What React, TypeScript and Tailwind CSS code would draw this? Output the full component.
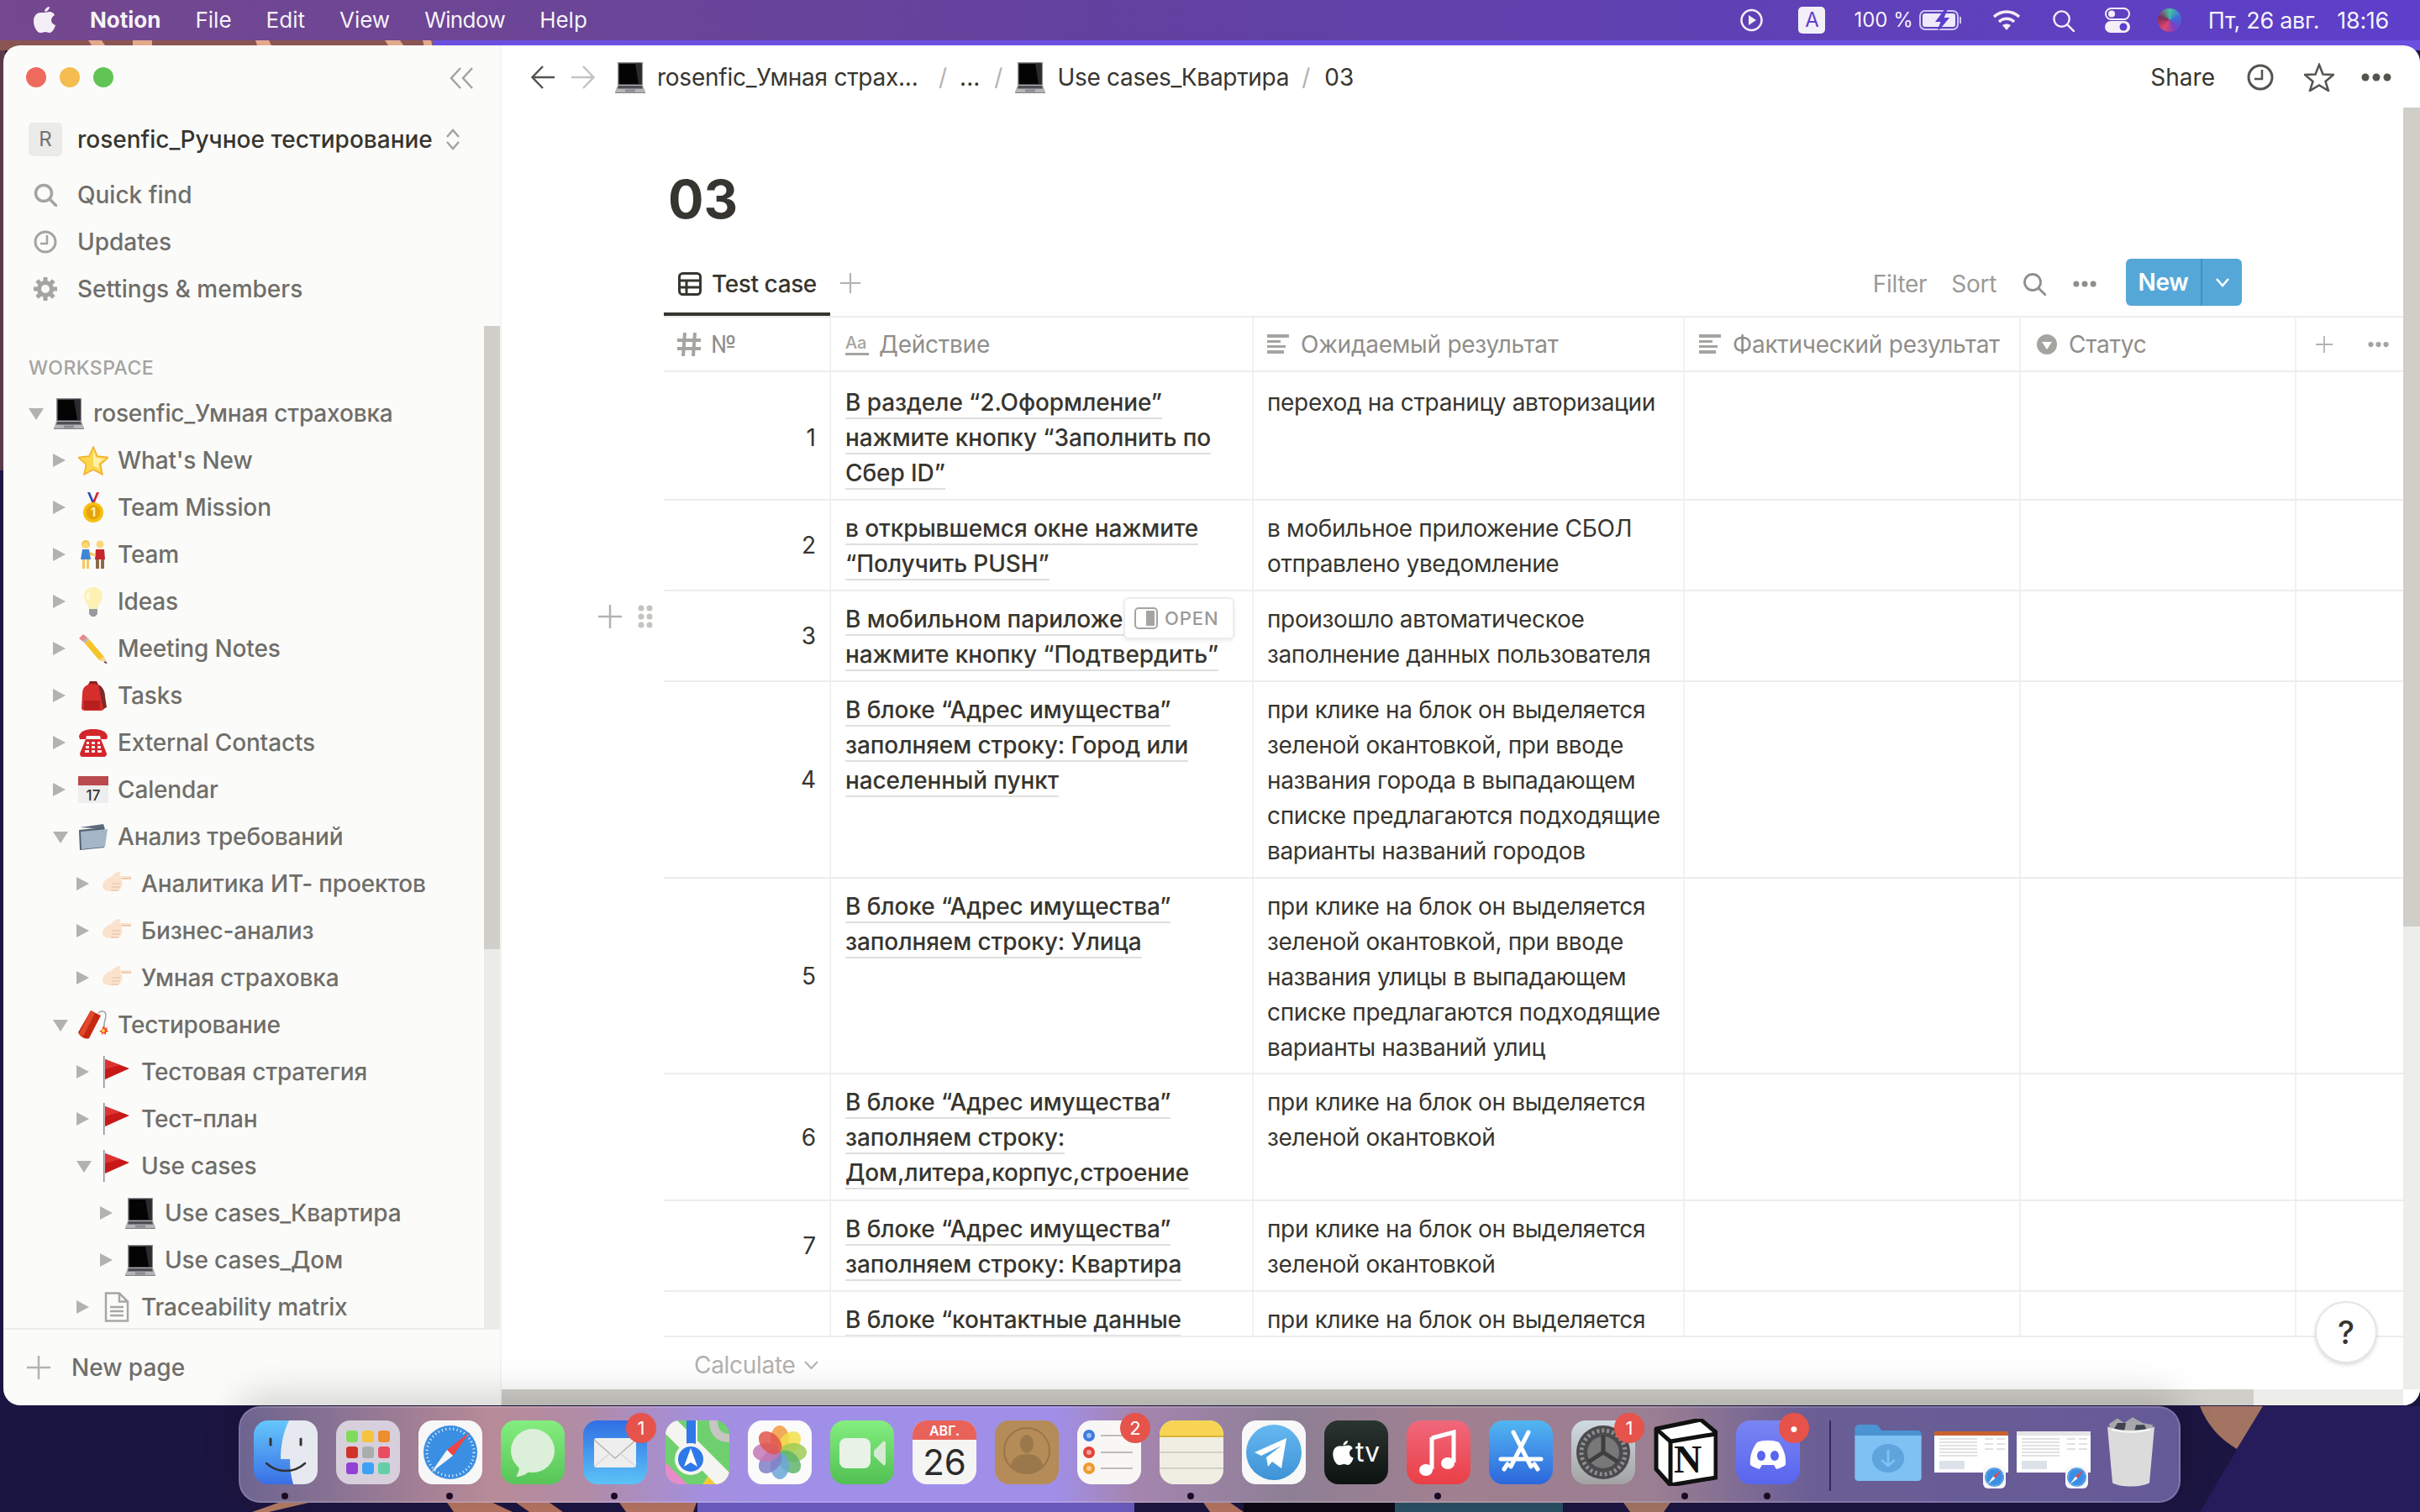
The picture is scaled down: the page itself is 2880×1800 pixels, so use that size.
import type { ReactNode } from 'react'

// ---------- emoji drawings (no colour emoji font on the page) ----------
const Laptop = () => (
  <svg width="36" height="38" viewBox="0 0 36 38">
    <path d="M3 1h30v27H3z" fill="#8e8e92" />
    <path d="M4.500 2.500h27v25h-27z" fill="#040404" />
    <path d="M24 2.500h7.500v25L28 27z" fill="#2b2b30" />
    <path d="M3 28h30l3 8.500H0z" fill="#b6b6ba" />
    <path d="M4 29h28l1 3.500H3z" fill="#4f4f53" />
    <path d="M12 33.500h12v3H12z" fill="#8d8d91" />
    <path d="M0 36.500h36V38H0z" fill="#85858a" />
  </svg>
)
const Star = () => (
  <svg width="36" height="36" viewBox="0 0 36 36">
    <path d="M18 2l5 11 13 1.500-9.500 8.500 2.500 12L18 29 7 35l2.500-12L0 14.500 13 13z" fill="#fbd64e" stroke="#f3ae2a" strokeWidth="1.500" />
    <path d="M18 7l3.500 8 9 1-6.500 6 1 6-7-3.500z" fill="#fff1a8" />
  </svg>
)
const Medal = () => (
  <svg width="36" height="36" viewBox="0 0 36 36">
    <path d="M11 0l6 14h3L14 0z" fill="#2b4fb8" />
    <path d="M25 0l-6 14h-3L22 0z" fill="#d7283a" />
    <circle cx="18" cy="24" r="12" fill="#f5c10e" />
    <circle cx="18" cy="24" r="8.500" fill="#e7a408" />
    <text x="18" y="29" textAnchor="middle" fontSize="14" fontWeight="700" fill="#fff3b8" fontFamily="Inter,sans-serif">1</text>
  </svg>
)
const Couple = () => (
  <svg width="36" height="36" viewBox="0 0 36 36">
    <circle cx="9" cy="6" r="5" fill="#f6c552" /><circle cx="9" cy="7" r="3.500" fill="#fcd77b" />
    <circle cx="26" cy="6" r="4.500" fill="#fcd77b" />
    <path d="M5 12h8l2 12H3z" fill="#3f86d8" />
    <path d="M21 12h10l1 12h-12z" fill="#c5262e" />
    <path d="M5 24h3v11H5zM10 24h3v11h-3z" fill="#f5c660" />
    <path d="M21 24h4v11h-4zM27 24h4v11h-4z" fill="#8f6a4a" />
    <path d="M14 15l7 3v2l-7-1z" fill="#f5c660" />
  </svg>
)
const Bulb = () => (
  <svg width="36" height="36" viewBox="0 0 36 36">
    <path d="M18 1c7 0 11 5 11 11 0 6-5 8-6 15H13c-1-7-6-9-6-15C7 6 11 1 18 1z" fill="#fdf1b4" />
    <path d="M13 8c-2 3-2 6 0 8" stroke="#fffbe6" strokeWidth="3" fill="none" />
    <path d="M13 27h10v6l-3 3h-4l-3-3z" fill="#9a9a9e" />
  </svg>
)
const Pencil = () => (
  <svg width="36" height="36" viewBox="0 0 36 36">
    <path d="M1 6l5-5 5 4-5 5z" fill="#e88a8d" />
    <path d="M6 10l5-5 2 2-5 5z" fill="#b8b8bc" />
    <path d="M8 12l5-5 18 21-6 4z" fill="#f6c429" />
    <path d="M25 32l6-4 4 8z" fill="#f1d5a8" />
    <path d="M32 33l3 3-4-1z" fill="#222" />
  </svg>
)
const Backpack = () => (
  <svg width="36" height="36" viewBox="0 0 36 36">
    <path d="M14 1h8l2 4H12z" fill="#8f1d1d" />
    <path d="M5 16C5 7 11 4 18 4s12 4 12 12l1 17c0 2-2 3-4 3H8c-2 0-4-1-4-3z" fill="#d62d2d" />
    <path d="M24 5c5 2 8 8 8 14l2 13-4 2z" fill="#7c2a2a" />
    <path d="M7 24h19v9c0 1-1 2-2 2H9c-1 0-2-1-2-2z" fill="#b71f1f" />
  </svg>
)
const Phone = () => (
  <svg width="36" height="34" viewBox="0 0 36 34">
    <path d="M1 10C2 3 10 1 18 1s16 2 17 9l-1 3h-7l-1-4H10l-1 4H2z" fill="#d4252b" />
    <path d="M9 13h18l7 17c0 2-1 4-3 4H5c-2 0-3-2-3-4z" fill="#d4252b" />
    <g fill="#f4e9e6">
      <path d="M10 16h3v3h-3zM16 16h4v3h-4zM23 16h3v3h-3zM9 21h4v3H9zM16 21h4v3h-4zM23 21h4v3h-4zM8 26h5v3H8zM16 26h4v3h-4zM23 26h5v3h-5z" />
    </g>
  </svg>
)
const CalendarEmoji = () => (
  <svg width="36" height="32" viewBox="0 0 36 32">
    <path d="M0 0h36v32H0z" fill="#eeeeee" />
    <path d="M0 0h36v11H0z" fill="#b94a4d" />
    <text x="18" y="29" textAnchor="middle" fontSize="17" fill="#333" fontFamily="Inter,sans-serif">17</text>
  </svg>
)
const Folder = () => (
  <svg width="36" height="32" viewBox="0 0 36 32">
    <path d="M2 5l28-4 2 6z" fill="#5d6d7e" />
    <path d="M1 8l30-3v24L2 32z" fill="#54616e" />
    <path d="M3 10l32-3-3 21-28 3z" fill="#a4b6c8" />
  </svg>
)
const Hand = () => (
  <svg width="36" height="30" viewBox="0 0 36 30">
    <path d="M12 6c2-3 6-5 9-5 1 0 2 1 1 3l-1 2h13c2 0 2 3 0 3H24l-1 2c2 1 2 3 1 4 1 2 0 3-1 4 0 2-1 3-2 4-2 1-5 1-9 1-5 0-10-1-11-5-1-5 4-10 12-13z" fill="#fbe2cc" />
    <path d="M22 15H13M22 19H12M20 23H11" stroke="#e4bea0" strokeWidth="1" fill="none" />
    <path d="M24 9h11" stroke="#e4a87a" strokeWidth="1" />
  </svg>
)
const Dynamite = () => (
  <svg width="36" height="36" viewBox="0 0 36 36">
    <path d="M15 1L27 7 13 34c-4 2-11-2-13-7z" fill="#c52810" />
    <path d="M15 1l5 3L6 32l-5-3z" fill="#e0492a" />
    <path d="M24 4c5-4 9-2 9 3 0 4-3 8-2 14" stroke="#a0a0a0" strokeWidth="1.500" fill="none" />
    <path d="M30 19l2 3 3-1-1 3 2 2-3 1 0 3-3-2-2 2 0-3-3-1 3-2z" fill="#ef4b23" />
    <circle cx="30" cy="25" r="2" fill="#ffd14a" />
  </svg>
)
const Flag = () => (
  <svg width="36" height="38" viewBox="0 0 36 38">
    <path d="M2 0h1.500v38H2z" fill="#8c8c90" />
    <path d="M4 4l29 11L4 28z" fill="#c81818" />
    <path d="M4 4l18 7L4 16z" fill="#dd3333" />
  </svg>
)
const Doc = () => (
  <svg width="30" height="36" viewBox="0 0 30 36" fill="none" stroke="#a8a7a3" strokeWidth="2.500">
    <path d="M2 1.500h16l10 10v23H2z" fill="#fbfbfa" />
    <path d="M18 1.500v10h10M7 18h16M7 23h16M7 28h16" />
  </svg>
)

// ---------- small stroke icons ----------
const Caret = ({ open }: { open?: boolean }) => (
  <svg width="18" height="18" viewBox="0 0 18 18" className="shrink-0">
    {open ? <path d="M0 3h18L9 17z" fill="#b3b2ae" /> : <path d="M0 1l15 8-15 8z" fill="#b3b2ae" />}
  </svg>
)
const Plus = ({ size = 28, color = '#b3b2ae' }: { size?: number; color?: string }) => (
  <svg width={size} height={size} viewBox="0 0 28 28" stroke={color} strokeWidth="2.500">
    <path d="M14 0v28M0 14h28" />
  </svg>
)
const Dots = ({ color = '#37352f', w = 36 }: { color?: string; w?: number }) => (
  <svg width={w} height="10" viewBox="0 0 36 10" fill={color}>
    <circle cx="5" cy="5" r="4.500" /><circle cx="18" cy="5" r="4.500" /><circle cx="31" cy="5" r="4.500" />
  </svg>
)
const Lines = () => (
  <svg width="26" height="24" viewBox="0 0 26 24" fill="#a5a4a0">
    <path d="M0 0h26v4H0zM0 7h16v3H0zM0 13h22v3H0zM0 19h20v4H0z" />
  </svg>
)
const Search = ({ color = '#a5a4a0', size = 28, sw = 3.500 }: { color?: string; size?: number; sw?: number }) => (
  <svg width={size} height={size} viewBox="0 0 28 28" fill="none" stroke={color} strokeWidth={sw}>
    <circle cx="12" cy="12" r="9.500" /><path d="M19 19l8 8" strokeLinecap="round" />
  </svg>
)
const Gear = () => (
  <svg width="28" height="30" viewBox="0 0 28 28" fill="none" stroke="#a5a4a0" className="mr-[24px]">
    <circle cx="14" cy="14" r="7.500" strokeWidth="5" />
    {[0, 45, 90, 135].map(a => (
      <path key={a} d="M14 0v28" strokeWidth="5" strokeDasharray="5 18" transform={`rotate(${a} 14 14)`} />
    ))}
  </svg>
)

// ---------- dock icons ----------
const Safari = ({ size = 76 }: { size?: number }) => (
  <svg width={size} height={size} viewBox="0 0 76 76">
    <rect width="76" height="76" rx="17" fill="#f7f7f7" />
    <circle cx="38" cy="38" r="32" fill="#3b8fe3" />
    <circle cx="38" cy="38" r="28" fill="none" stroke="#fff" strokeWidth="3" strokeDasharray="1 3.500" />
    <path d="M61 14L41 42 34 35z" fill="#ef4444" />
    <path d="M15 62l19-27 7 7z" fill="#f5f5f5" />
  </svg>
)
const icons: Record<string, ReactNode> = {
  finder: (
    <svg width="76" height="76" viewBox="0 0 76 76">
      <defs>
        <linearGradient id="fa" x1="0" y1="0" x2="0" y2="1"><stop stopColor="#64c8fb" /><stop offset="1" stopColor="#3a6fe6" /></linearGradient>
      </defs>
      <rect width="76" height="76" rx="17" fill="url(#fa)" />
      <path d="M42 0h17c10 0 17 7 17 17v42c0 10-7 17-17 17H47c-3-10-4-20-4-30H32c0-16 3-32 10-46z" fill="#e6e9ef" />
      <path d="M20 22v7M56 22v7" stroke="#333" strokeWidth="3" strokeLinecap="round" />
      <path d="M15 51c13 12 33 12 46 0" stroke="#333" strokeWidth="2.500" fill="none" strokeLinecap="round" />
    </svg>
  ),
  launchpad: (
    <svg width="76" height="76" viewBox="0 0 76 76">
      <rect width="76" height="76" rx="17" fill="#d7d0dc" />
      {[['#7fdc5b', 12, 12], ['#f7c33c', 31, 12], ['#ed8d2e', 50, 12], ['#d1332b', 12, 31], ['#a9adae', 31, 31], ['#ea4d63', 50, 31], ['#9340d4', 12, 50], ['#3da2f3', 31, 50], ['#64cfa7', 50, 50]].map(([c, x, y]) => (
        <rect key={String(c)} x={x} y={y} width="14" height="14" rx="3.500" fill={String(c)} />
      ))}
    </svg>
  ),
  safari: <Safari />,
  messages: (
    <svg width="76" height="76" viewBox="0 0 76 76">
      <defs><linearGradient id="ma" x1="0" y1="0" x2="0" y2="1"><stop stopColor="#84ee80" /><stop offset="1" stopColor="#57c457" /></linearGradient></defs>
      <rect width="76" height="76" rx="17" fill="url(#ma)" />
      <ellipse cx="38" cy="36" rx="26" ry="26" fill="#dcefd8" />
      <path d="M22 54c0 6-2 10-4 13 6 0 13-3 16-7z" fill="#dcefd8" />
    </svg>
  ),
  mail: (
    <svg width="76" height="76" viewBox="0 0 76 76">
      <defs><linearGradient id="ml" x1="0" y1="0" x2="0" y2="1"><stop stopColor="#2f6ee4" /><stop offset="1" stopColor="#5cc3f7" /></linearGradient></defs>
      <rect width="76" height="76" rx="17" fill="url(#ml)" />
      <rect x="13" y="21" width="50" height="35" rx="3" fill="#eeeeee" />
      <path d="M13 23l25 22 25-22" stroke="#b5b5b5" strokeWidth="1.500" fill="none" />
      <path d="M13 55l19-16M63 55L44 39" stroke="#c9c9c9" strokeWidth="1" />
    </svg>
  ),
  maps: (
    <svg width="76" height="76" viewBox="0 0 76 76">
      <defs><clipPath id="mc"><rect width="76" height="76" rx="17" /></clipPath></defs>
      <g clipPath="url(#mc)">
        <rect width="76" height="76" fill="#6fd06f" />
        <path d="M0 50l26 26H0z" fill="#e88bca" />
        <path d="M44 76l14-20 18 20z" fill="#f5cb3c" />
        <path d="M0 0h14l62 62v14H60L0 16z" fill="#f4f4f0" />
        <path d="M26 0h12v44H26z" fill="#f4f4f0" />
        <path d="M25 0h11v40H25z" fill="#2f78ea" />
        <path d="M52 0c0 16 8 26 24 26V16C66 16 62 10 62 0z" fill="#c6c6c2" />
        <circle cx="30" cy="46" r="19" fill="#f4f4f0" />
        <circle cx="30" cy="46" r="15" fill="#2f78ea" />
        <path d="M30 33l8 22-8-5-8 5z" fill="#fff" />
      </g>
    </svg>
  ),
  photos: (
    <svg width="76" height="76" viewBox="0 0 76 76">
      <rect width="76" height="76" rx="17" fill="#fbfbfb" />
      {[['#f29b3c', 0], ['#f2df4b', 45], ['#9ecb55', 90], ['#5fb56b', 135], ['#6ba6d9', 180], ['#7f7fc5', 225], ['#c478b4', 270], ['#e0554c', 315]].map(([c, a]) => (
        <ellipse key={String(a)} cx="38" cy="22" rx="11" ry="16" fill={String(c)} opacity="0.85" transform={`rotate(${a} 38 38)`} />
      ))}
    </svg>
  ),
  facetime: (
    <svg width="76" height="76" viewBox="0 0 76 76">
      <defs><linearGradient id="ft" x1="0" y1="0" x2="0" y2="1"><stop stopColor="#84ee80" /><stop offset="1" stopColor="#52c052" /></linearGradient></defs>
      <rect width="76" height="76" rx="17" fill="url(#ft)" />
      <rect x="11" y="21" width="37" height="36" rx="8" fill="#e8f2e6" />
      <path d="M52 36l11-11c1-1 3 0 3 2v24c0 2-2 3-3 2L52 42z" fill="#d5ead2" />
    </svg>
  ),
  calendar: (
    <div className="flex h-[76px] w-[76px] flex-col overflow-hidden rounded-[17px] bg-[#f5f5f3]">
      <div className="flex h-[23px] items-center justify-center bg-[#e8625a] text-[16px] font-semibold leading-none text-white">АВГ.</div>
      <div className="flex flex-1 items-center justify-center text-[42px] leading-none text-[#2b2b2b]">26</div>
    </div>
  ),
  contacts: (
    <svg width="76" height="76" viewBox="0 0 76 76">
      <rect width="76" height="76" rx="17" fill="#b58c58" />
      <circle cx="38" cy="36" r="27" fill="none" stroke="#97754a" strokeWidth="2" />
      <ellipse cx="38" cy="28" rx="8" ry="11" fill="#9a784c" />
      <path d="M18 55c3-12 12-15 20-15s17 3 20 15c-5 5-12 8-20 8s-15-3-20-8z" fill="#9a784c" />
    </svg>
  ),
  reminders: (
    <svg width="76" height="76" viewBox="0 0 76 76">
      <rect width="76" height="76" rx="17" fill="#f8f7f5" />
      <circle cx="14" cy="18" r="7" fill="#3d7ce0" /><circle cx="14" cy="38" r="7" fill="#e2433c" /><circle cx="14" cy="57" r="7" fill="#ee9a2e" />
      <circle cx="14" cy="18" r="3" fill="#fff" opacity=".5" /><circle cx="14" cy="38" r="3" fill="#fff" opacity=".5" /><circle cx="14" cy="57" r="3" fill="#fff" opacity=".5" />
      <path d="M28 18h38M28 38h38M28 57h38" stroke="#bdbcb9" strokeWidth="2" />
    </svg>
  ),
  notes: (
    <svg width="76" height="76" viewBox="0 0 76 76">
      <defs><clipPath id="nc"><rect width="76" height="76" rx="17" /></clipPath></defs>
      <g clipPath="url(#nc)">
        <rect width="76" height="76" fill="#f0ede3" />
        <rect width="76" height="19" fill="#f8d455" />
        <path d="M0 19h76" stroke="#dcb53a" strokeWidth="2" />
        <path d="M0 38h76M0 57h76" stroke="#d2d0c8" strokeWidth="2" />
      </g>
    </svg>
  ),
  telegram: (
    <svg width="76" height="76" viewBox="0 0 76 76">
      <defs><linearGradient id="tg" x1="0" y1="0" x2="0" y2="1"><stop stopColor="#66b8f1" /><stop offset="1" stopColor="#3e93d6" /></linearGradient></defs>
      <rect width="76" height="76" rx="17" fill="#f8f8f8" />
      <circle cx="38" cy="38" r="33" fill="url(#tg)" />
      <path d="M15 38l38-17-6 36-11-8-5 6-2-11 18-14-24 12z" fill="#fff" />
    </svg>
  ),
  tv: (
    <div className="flex h-[76px] w-[76px] items-center justify-center gap-[2px] rounded-[17px] bg-gradient-to-b from-[#2a3530] to-[#0e1312] text-[32px] font-normal leading-none text-white">
      <svg width="25" height="30" viewBox="0 0 26 32" fill="#fff">
        <path d="M19 1c0 3-3 6-6 6 0-3 3-6 6-6zM13 8c2 0 3-1 6-1 2 0 5 1 6 4-3 2-4 4-4 6 0 3 2 5 5 6-1 4-4 9-7 9-2 0-3-1-5-1s-3 1-5 1C5 33 0 26 0 18 0 12 4 8 8 8c2 0 4 0 5 0z" />
      </svg>
      tv
    </div>
  ),
  music: (
    <svg width="76" height="76" viewBox="0 0 76 76">
      <defs><linearGradient id="mu" x1="0" y1="0" x2="0" y2="1"><stop stopColor="#f0687c" /><stop offset="1" stopColor="#ea3f47" /></linearGradient></defs>
      <rect width="76" height="76" rx="17" fill="url(#mu)" />
      <path d="M30 21l26-7v36" stroke="#fff" strokeWidth="5" fill="none" />
      <path d="M30 20v38" stroke="#fff" strokeWidth="5" />
      <ellipse cx="23" cy="59" rx="8" ry="7" fill="#fff" /><ellipse cx="49" cy="51" rx="8" ry="7" fill="#fff" />
    </svg>
  ),
  appstore: (
    <svg width="76" height="76" viewBox="0 0 76 76">
      <defs><linearGradient id="as" x1="0" y1="0" x2="0" y2="1"><stop stopColor="#52b6f2" /><stop offset="1" stopColor="#2c66dc" /></linearGradient></defs>
      <rect width="76" height="76" rx="17" fill="url(#as)" />
      <path d="M29 14l21 41M47 14L26 55M14 46h48M18 58l4-6M58 58l-4-6" stroke="#fff" strokeWidth="5" strokeLinecap="round" />
    </svg>
  ),
  settings: (
    <svg width="76" height="76" viewBox="0 0 76 76">
      <defs><linearGradient id="st" x1="0" y1="0" x2="0" y2="1"><stop stopColor="#cfdbe2" /><stop offset="1" stopColor="#a2a2a2" /></linearGradient></defs>
      <rect width="76" height="76" rx="17" fill="url(#st)" />
      <circle cx="38" cy="38" r="32" fill="#4b4b4d" />
      <circle cx="38" cy="38" r="26" fill="none" stroke="#8f8f92" strokeWidth="5" strokeDasharray="3 3" />
      <circle cx="38" cy="38" r="19" fill="#787879" />
      <path d="M38 38V18M38 38L21 49M38 38l17 11" stroke="#3e3e40" strokeWidth="5" />
    </svg>
  ),
  notion: (
    <div className="relative h-[76px] w-[76px]">
      <svg className="absolute -top-[2px] left-0" width="76" height="80" viewBox="0 0 76 80">
        <path d="M3 12L56 1l18 15 0 54-54 9L3 60z" fill="#fff" stroke="#111" strokeWidth="5" strokeLinejoin="round" />
        <path d="M3 12l17 15 54-9" fill="none" stroke="#111" strokeWidth="5" />
        <path d="M20 27v50" stroke="#111" strokeWidth="5" />
      </svg>
      <div className="absolute left-[24px] top-[24px] text-[46px] font-bold leading-none text-[#111] [font-family:'Liberation_Serif',serif]">N</div>
    </div>
  ),
  discord: (
    <svg width="76" height="76" viewBox="0 0 76 76">
      <defs><linearGradient id="dc" x1="0" y1="0" x2="0" y2="1"><stop stopColor="#7a85f3" /><stop offset="1" stopColor="#5865ee" /></linearGradient></defs>
      <rect width="76" height="76" rx="17" fill="url(#dc)" />
      <path d="M25 26c8-3 18-3 26 0 6 8 9 17 8 27-4 3-8 4-11 5l-3-5-14 0-3 5c-3-1-7-2-11-5-1-10 2-19 8-27z" fill="#fff" />
      <ellipse cx="30" cy="42" rx="5" ry="6" fill="#5865ee" /><ellipse cx="46" cy="42" rx="5" ry="6" fill="#5865ee" />
    </svg>
  ),
  folder: (
    <svg width="86" height="76" viewBox="0 0 76 76" preserveAspectRatio="none">
      <path d="M3 20V10c0-3 2-5 5-5h16c3 0 5 3 7 7h38c2 0 4 2 4 4v8z" fill="#4b93d2" />
      <path d="M3 18h70v50c0 3-2 4-4 4H7c-2 0-4-1-4-4z" fill="#7ec2f4" />
      <circle cx="38" cy="45" r="17" fill="#5fa4dc" />
      <path d="M38 35v19M31 47l7 7 7-7" stroke="#7ec2f4" strokeWidth="2.500" fill="none" />
    </svg>
  ),
  trash: (
    <svg width="76" height="86" viewBox="0 0 76 76" preserveAspectRatio="none">
      <path d="M12 9l10-6 8 5 10-6 12 6 12 2-2 10H14z" fill="#a7a7ab" />
      <path d="M22 8h10l-2 9H16zM44 10h10l4 8H42z" fill="#3f4350" />
      <path d="M10 12c15 5 41 5 56 0L60 71c-8 5-36 5-44 0z" fill="#dcdbdc" />
      <path d="M15 15c14 3 32 3 46 0" stroke="#f4f4f4" strokeWidth="2" fill="none" />
    </svg>
  ),
}

const DocThumb = ({ header }: { header: string }) => (
  <div className="relative h-[76px] w-[76px]">
    <div className="absolute left-0 top-[13px] h-[49px] w-[88px] overflow-hidden bg-white">
      <div className={`h-[5px] w-full ${header}`} />
      <svg width="88" height="44" viewBox="0 0 88 44" stroke="#c3c3c8" strokeWidth="1">
        <path d="M6 4h45M6 8h45M6 12h45M6 16h45M6 20h45M6 24h45M60 4h10M74 4h10M60 10h10M74 10h10M60 16h10M74 16h10" />
        <path d="M6 30h30v10H6z" fill="#dde1ea" stroke="none" />
      </svg>
    </div>
    <div className="absolute left-[58px] top-[54px]"><Safari size={27} /></div>
  </div>
)

const dock: { id: string; badge?: string; dot?: boolean }[] = [
  { id: 'finder', dot: true },
  { id: 'launchpad' },
  { id: 'safari', dot: true },
  { id: 'messages' },
  { id: 'mail', badge: '1', dot: true },
  { id: 'maps' },
  { id: 'photos' },
  { id: 'facetime' },
  { id: 'calendar' },
  { id: 'contacts' },
  { id: 'reminders', badge: '2' },
  { id: 'notes', dot: true },
  { id: 'telegram' },
  { id: 'tv' },
  { id: 'music', dot: true },
  { id: 'appstore' },
  { id: 'settings', badge: '1' },
  { id: 'notion', dot: true },
  { id: 'discord', badge: '•', dot: true },
]

function Dock() {
  return (
    <div className="relative z-10 ml-[284px] mt-px flex h-[115px] w-[2311px] items-start gap-[22px] rounded-[26px] border-2 border-white/15 bg-[linear-gradient(90deg,#6d6490_0%,#b88b98_13%,#b08ca8_18%,#a48fe0_24%,#a08fe8_29%,#a08fe8_42%,#a585b0_46%,#8e7f95_54%,#a08090_62%,#9a7e92_73%,#6a5e95_81%,#655a98_100%)] pl-[16px] pt-[15px] shadow-[0_-14px_44px_rgba(0,0,0,0.16)]">
      {dock.map(d => (
        <div key={d.id} className="relative h-[76px] w-[76px]">
          {icons[d.id]}
          {d.badge && (
            <div className="absolute left-[51px] top-[-9px] flex h-[36px] w-[36px] items-center justify-center rounded-full bg-[#e5534b] text-[22px] leading-none text-white">{d.badge}</div>
          )}
          {d.dot && <div className="absolute left-[33px] top-[86px] h-[8px] w-[8px] rounded-full bg-[#1c0a24]" />}
        </div>
      ))}
      <div className="relative ml-[13px] mr-[3px] h-[84px] w-[2px] bg-[#2f2a55]" />
      <div className="relative h-[76px] w-[76px]">{icons.folder}</div>
      <DocThumb header="bg-[#c8622d]" />
      <DocThumb header="bg-[#e5e5e8]" />
      <div className="relative -mt-[6px] h-[76px] w-[76px]">{icons.trash}</div>
    </div>
  )
}

function MenuBar() {
  return (
    <div className="relative flex h-12 shrink-0 items-center justify-between bg-gradient-to-r from-[#74488f] via-[#63419f] via-45% to-[#5d3fcb] pl-[40px] pr-[37px] text-[26px] leading-none text-white/95">
      <div className="flex items-center">
        <svg width="26" height="32" viewBox="0 0 26 32" fill="#f4eff6" className="mr-[41px] -translate-y-[1px]">
          <path d="M19 1c0 3-3 6-6 6 0-3 3-6 6-6zM13 8c2 0 3-1 6-1 2 0 5 1 6 4-3 2-4 4-4 6 0 3 2 5 5 6-1 4-4 9-7 9-2 0-3-1-5-1s-3 1-5 1C5 33 0 26 0 18 0 12 4 8 8 8c2 0 4 0 5 0z" />
        </svg>
        <span className="mr-[41px] font-bold">Notion</span>
        <span className="mr-[41px]">File</span>
        <span className="mr-[41px]">Edit</span>
        <span className="mr-[41px]">View</span>
        <span className="mr-[41px] tracking-[-0.6px]">Window</span>
        <span>Help</span>
      </div>
      <div className="flex items-center">
        <svg width="27" height="28" viewBox="0 0 27 28" fill="none" stroke="#f4eff6" strokeWidth="2.500" className="mr-[42px]">
          <circle cx="13.500" cy="14" r="12" /><path d="M10 8l9 6-9 6z" fill="#f4eff6" stroke="none" />
        </svg>
        <div className="mr-[34px] flex h-[32px] w-[32px] items-center justify-center rounded-[5px] bg-[#f2eff9] text-[24px] text-[#5d3fcb]">A</div>
        <span className="mr-[7px] text-[24px]">100 %</span>
        <svg width="51" height="24" viewBox="0 0 51 24" className="mr-[36px]">
          <rect x="1" y="1" width="45" height="22" rx="6" fill="none" stroke="#cfc6f2" strokeWidth="2" />
          <rect x="4" y="4" width="39" height="16" rx="3" fill="#eeeafb" />
          <path d="M30 1l-9 12h6l-4 10 11-13h-6l4-9z" fill="#5d3fcb" stroke="#5d3fcb" strokeWidth="2" />
          <path d="M48 8h2v8h-2z" fill="#cfc6f2" />
        </svg>
        <svg width="34" height="26" viewBox="0 0 34 26" fill="none" stroke="#f4eff6" strokeWidth="3.500" className="mr-[37px]">
          <path d="M2 9c9-8 21-8 30 0M8 15c5-5 13-5 18 0" /><path d="M17 25l-5-6c3-2 7-2 10 0z" fill="#f4eff6" stroke="none" />
        </svg>
        <div className="mr-[36px]"><Search color="#f4eff6" size={27} sw={2.500} /></div>
        <svg width="30" height="30" viewBox="0 0 30 30" className="mr-[33px]">
          <rect x="1" y="1" width="28" height="13" rx="6.500" fill="none" stroke="#f4eff6" strokeWidth="2" />
          <circle cx="8" cy="7.500" r="4" fill="#f4eff6" />
          <rect y="16" width="30" height="14" rx="7" fill="#f4eff6" />
          <circle cx="22" cy="23" r="4.500" fill="#5d3fcb" />
        </svg>
        <div className="mr-[32px] h-[28px] w-[28px] rounded-full bg-[conic-gradient(#46c3a5,#3c6cd8,#7a3fc8,#e0466e,#7c2d5f,#46c3a5)]" />
        <span className="mr-[21px] text-[27px] tracking-[-0.3px]">Пт, 26 авг.</span>
        <span className="text-[27px] tracking-[-0.3px]">18:16</span>
      </div>
    </div>
  )
}

const tree: { label: string; level: number; open?: boolean; icon: ReactNode }[] = [
  { label: 'rosenfic_Умная страховка', level: 0, open: true, icon: <Laptop /> },
  { label: "What's New", level: 1, icon: <Star /> },
  { label: 'Team Mission', level: 1, icon: <Medal /> },
  { label: 'Team', level: 1, icon: <Couple /> },
  { label: 'Ideas', level: 1, icon: <Bulb /> },
  { label: 'Meeting Notes', level: 1, icon: <Pencil /> },
  { label: 'Tasks', level: 1, icon: <Backpack /> },
  { label: 'External Contacts', level: 1, icon: <Phone /> },
  { label: 'Calendar', level: 1, icon: <CalendarEmoji /> },
  { label: 'Анализ требований', level: 1, open: true, icon: <Folder /> },
  { label: 'Аналитика ИТ- проектов', level: 2, icon: <Hand /> },
  { label: 'Бизнес-анализ', level: 2, icon: <Hand /> },
  { label: 'Умная страховка', level: 2, icon: <Hand /> },
  { label: 'Тестирование', level: 1, open: true, icon: <Dynamite /> },
  { label: 'Тестовая стратегия', level: 2, icon: <Flag /> },
  { label: 'Тест-план', level: 2, icon: <Flag /> },
  { label: 'Use cases', level: 2, open: true, icon: <Flag /> },
  { label: 'Use cases_Квартира', level: 3, icon: <Laptop /> },
  { label: 'Use cases_Дом', level: 3, icon: <Laptop /> },
  { label: 'Traceability matrix', level: 2, icon: <Doc /> },
]

function Sidebar() {
  return (
    <aside className="flex w-[593px] shrink-0 flex-col border-r-2 border-[#f3f3f1] bg-[#fbfbfa] text-[28px] font-medium text-[#6f6e69]">
      <div className="flex h-[84px] shrink-0 items-start justify-between pl-[27px] pr-[32px] pt-[26px]">
        <div className="flex gap-[16px]">
          <div className="h-[24px] w-[24px] rounded-full bg-[#ee6a5f]" />
          <div className="h-[24px] w-[24px] rounded-full bg-[#f5bd4f]" />
          <div className="h-[24px] w-[24px] rounded-full bg-[#61c454]" />
        </div>
        <svg width="28" height="26" viewBox="0 0 28 26" fill="none" stroke="#a5a4a0" strokeWidth="2.500">
          <path d="M13 1L2 13l11 12M27 1L16 13l11 12" />
        </svg>
      </div>
      <div className="flex h-[56px] shrink-0 items-center pl-[30px] text-[#37352f]">
        <div className="mr-[18px] flex h-[40px] w-[40px] items-center justify-center rounded-[5px] bg-[#ebebe9] text-[24px] font-normal text-[#73726e]">R</div>
        <span>rosenfic_Ручное тестирование</span>
        <svg width="18" height="26" viewBox="0 0 18 26" fill="none" stroke="#a5a4a0" strokeWidth="2.500" className="ml-[15px]">
          <path d="M2 10l7-8 7 8M2 16l7 8 7-8" />
        </svg>
      </div>
      <div className="mt-[10px] flex shrink-0 flex-col">
        <div className="flex h-[56px] items-center pl-[36px]">
          <div className="mr-[24px]"><Search /></div>Quick find
        </div>
        <div className="flex h-[56px] items-center pl-[36px]">
          <svg width="28" height="28" viewBox="0 0 28 28" fill="none" stroke="#a5a4a0" strokeWidth="3" className="mr-[24px]">
            <circle cx="14" cy="14" r="12" /><path d="M16 6v10H8" strokeWidth="2.500" />
          </svg>
          Updates
        </div>
        <div className="flex h-[56px] items-center pl-[36px]">
          <Gear />
          Settings &amp; members
        </div>
      </div>
      <div className="mt-[16px] flex min-h-0 flex-1">
        <div className="min-w-0 flex-1 overflow-hidden">
          <div className="mb-[12px] ml-[30px] mt-[36px] text-[23px] leading-[28px] tracking-[0.02em] text-[#a5a4a0]">WORKSPACE</div>
          {tree.map(t => (
            <div key={t.label} className={`flex h-[56px] items-center ${t.level === 0 ? 'pl-[30px]' : t.level === 1 ? 'pl-[59px]' : t.level === 2 ? 'pl-[87px]' : 'pl-[115px]'}`}>
              <div className="mr-[12px] w-[18px]"><Caret open={t.open} /></div>
              <div className="mr-[11px] flex h-[38px] w-[36px] items-center justify-center">{t.icon}</div>
              <span className="whitespace-nowrap tracking-[-0.15px]">{t.label}</span>
            </div>
          ))}
        </div>
        <div className="w-[19px] bg-[#ebebe8]"><div className="h-[742px] bg-[#d0cfca]" /></div>
      </div>
      <div className="flex h-[92px] shrink-0 items-center border-t-2 border-[#ececea] pl-[28px]">
        <div className="mr-[25px]"><Plus /></div>New page
      </div>
    </aside>
  )
}

const rows: { n: string; h: string; first?: boolean; action: string[]; expected: string[] }[] = [
  { n: '1', h: 'h-[153px]', first: true, action: ['В разделе “2.Оформление”', 'нажмите кнопку “Заполнить по', 'Сбер ID”'], expected: ['переход на страницу авторизации'] },
  { n: '2', h: 'h-[108px]', action: ['в открывшемся окне нажмите', '“Получить PUSH”'], expected: ['в мобильное приложение СБОЛ', 'отправлено уведомление'] },
  { n: '3', h: 'h-[108px]', action: ['В мобильном париложении', 'нажмите кнопку “Подтвердить”'], expected: ['произошло автоматическое', 'заполнение данных пользователя'] },
  { n: '4', h: 'h-[234px]', action: ['В блоке “Адрес имущества”', 'заполняем строку: Город или', 'населенный пункт'], expected: ['при клике на блок он выделяется', 'зеленой окантовкой, при вводе', 'названия города в выпадающем', 'списке предлагаются подходящие', 'варианты названий городов'] },
  { n: '5', h: 'h-[233px]', action: ['В блоке “Адрес имущества”', 'заполняем строку: Улица'], expected: ['при клике на блок он выделяется', 'зеленой окантовкой, при вводе', 'названия улицы в выпадающем', 'списке предлагаются подходящие', 'варианты названий улиц'] },
  { n: '6', h: 'h-[151px]', action: ['В блоке “Адрес имущества”', 'заполняем строку:', 'Дом,литера,корпус,строение'], expected: ['при клике на блок он выделяется', 'зеленой окантовкой'] },
  { n: '7', h: 'h-[108px]', action: ['В блоке “Адрес имущества”', 'заполняем строку: Квартира'], expected: ['при клике на блок он выделяется', 'зеленой окантовкой'] },
  { n: '', h: 'h-[54px]', action: ['В блоке “контактные данные'], expected: ['при клике на блок он выделяется'] },
]

const grid = 'grid grid-cols-[199px_503px_513px_400px_328px_127px]'
const cell = 'border-r-2 border-[#f1f1ef]'

function Table() {
  return (
    <div className="text-[28px] text-[#37352f]">
      <div className={`${grid} h-[67px] border-y-2 border-[#ededec] tracking-[-0.25px] text-[#8f8e8a]`}>
        <div className={`${cell} flex items-center gap-[12px] pl-[16px]`}>
          <svg width="28" height="28" viewBox="0 0 28 28" stroke="#a5a4a0" strokeWidth="4"><path d="M9 0L7 28M21 0l-2 28M0 9h28M0 19h28" /></svg>
          №
        </div>
        <div className={`${cell} flex items-center gap-[12px] pl-[17px]`}>
          <span className="w-[28px] border-b-[3px] border-[#a5a4a0] text-[20px] font-medium leading-[24px] text-[#a5a4a0]">Aa</span>
          Действие
        </div>
        <div className={`${cell} flex items-center gap-[14px] pl-[16px]`}><Lines />Ожидаемый результат</div>
        <div className={`${cell} flex items-center gap-[14px] pl-[17px]`}><Lines />Фактический результат</div>
        <div className={`${cell} flex items-center gap-[14px] pl-[19px]`}>
          <svg width="24" height="24" viewBox="0 0 24 24"><circle cx="12" cy="12" r="12" fill="#a5a4a0" /><path d="M6 9h12l-6 9z" fill="#fff" /></svg>
          Статус
        </div>
        <div className="flex items-center gap-[42px] pl-[23px]">
          <Plus size={20} />
          <Dots color="#a5a4a0" w={25} />
        </div>
      </div>
      {rows.map(r => (
        <div key={r.action[0] + r.n} className={`${grid} ${r.h} overflow-hidden border-b-2 border-[#ededec]`}>
          <div className={`${cell} flex items-center justify-end pr-[16px] ${r.first ? 'pt-[5px]' : ''}`}>{r.n}</div>
          <div className={`${cell} pl-[17px] font-medium leading-[42px] tracking-[-0.1px] ${r.first ? 'pt-[15px]' : 'pt-[12px]'}`}>
            {r.action.map(l => (
              <div key={l} className="whitespace-nowrap">
                <span className="border-b-2 border-[#dfdfdd] pb-[1px]">{l}</span>
              </div>
            ))}
          </div>
          <div className={`${cell} pl-[16px] leading-[42px] tracking-[-0.35px] ${r.first ? 'pt-[15px]' : 'pt-[12px]'}`}>
            {r.expected.map(l => <div key={l} className="whitespace-nowrap">{l}</div>)}
          </div>
          <div className={cell} />
          <div className={cell} />
          <div />
        </div>
      ))}
    </div>
  )
}

function Main() {
  return (
    <main className="flex min-w-0 flex-1 flex-col bg-white text-[#37352f]">
      <div className="flex h-[74px] shrink-0 items-center justify-between pl-[35px] pr-[34px] pt-[2px] text-[28px]">
        <div className="flex items-center">
          <svg width="28" height="28" viewBox="0 0 28 28" fill="none" stroke="#55534e" strokeWidth="2.500" className="mr-[20px]">
            <path d="M14 1L1.500 14 14 27M2 14h26" />
          </svg>
          <svg width="28" height="28" viewBox="0 0 28 28" fill="none" stroke="#c4c3c0" strokeWidth="2.500" className="mr-[24px]">
            <path d="M14 1l12.500 13L14 27M26 14H0" />
          </svg>
          <Laptop />
          <span className="ml-[14px] w-[335px] whitespace-nowrap tracking-[-0.25px]">rosenfic_Умная страх...</span>
          <span className="mr-[15px] text-[#b3b2ae]">/</span>
          <span className="mr-[17px]">...</span>
          <span className="mr-[15px] text-[#b3b2ae]">/</span>
          <Laptop />
          <span className="ml-[14px] mr-[15px] whitespace-nowrap tracking-[-0.3px]">Use cases_Квартира</span>
          <span className="mr-[17px] text-[#b3b2ae]">/</span>
          <span>03</span>
        </div>
        <div className="flex items-center">
          <span className="mr-[38px]">Share</span>
          <svg width="32" height="32" viewBox="0 0 32 32" fill="none" stroke="#55534e" strokeWidth="3" className="mr-[36px]">
            <circle cx="16" cy="16" r="14" /><path d="M18 7v11H9" strokeWidth="2.500" />
          </svg>
          <svg width="36" height="34" viewBox="0 0 36 34" fill="none" stroke="#55534e" strokeWidth="2.500" className="mr-[32px]">
            <path d="M18 2l4.500 11.500L35 14l-9.500 8 3.500 11L18 26.500 7 33l3.500-11L1 14l12.500-.5z" />
          </svg>
          <Dots color="#55534e" />
        </div>
      </div>
      <div className="flex min-h-0 flex-1">
        <div className="relative min-w-0 flex-1 overflow-hidden pl-[193px]">
          <h1 className="ml-[5px] mt-[78px] text-[63px] font-bold leading-[62px]">03</h1>
          <div className="mt-[32px] flex h-[76px] items-stretch">
            <div className="flex w-[198px] items-center gap-[12px] border-b-4 border-[#37352f] pl-[17px] pt-[4px] text-[28px] font-medium tracking-[-0.4px]">
              <svg width="28" height="28" viewBox="0 0 28 28" fill="none" stroke="#37352f" strokeWidth="3">
                <rect x="1.500" y="1.500" width="25" height="25" rx="4" /><path d="M1 10h26M1 18h26M10 10v17" />
              </svg>
              Test case
            </div>
            <div className="ml-[12px] flex items-center pb-[2px]"><Plus size={24} /></div>
            <div className="flex flex-1 items-center justify-end pr-[192px] text-[28px] tracking-[-0.3px] text-[#9b9a97]">
              <span className="mr-[29px]">Filter</span>
              <span className="mr-[31px]">Sort</span>
              <div className="mr-[32px]"><Search size={28} sw={2.800} color="#8f8e8a" /></div>
              <div className="mr-[35px]"><Dots color="#8f8e8a" w={28} /></div>
              <div className="mb-[4px] flex h-[56px] w-[138px] items-stretch overflow-hidden rounded-[6px] bg-[#55a7d7] font-semibold text-white">
                <div className="flex w-[91px] items-center justify-center border-r-2 border-[#4a8fbb]">New</div>
                <div className="flex flex-1 items-center justify-center">
                  <svg width="16" height="12" viewBox="0 0 16 12" fill="none" stroke="#fff" strokeWidth="2.500"><path d="M1 2l7 8 7-8" /></svg>
                </div>
              </div>
            </div>
          </div>
          <Table />
          <div className="flex h-[63px] items-center gap-[10px] pl-[36px] pt-[2px] text-[28px] tracking-[-0.3px] text-[#b3b2ae]">
            Calculate
            <svg width="17" height="12" viewBox="0 0 17 12" fill="none" stroke="#b3b2ae" strokeWidth="2"><path d="M1 2l7.500 8L16 2" /></svg>
          </div>
          <div className="absolute left-[115px] top-[592px] flex items-center gap-[19px]">
            <Plus />
            <svg width="18" height="28" viewBox="0 0 18 28" fill="#c4c3c0">
              <circle cx="4" cy="4" r="3.500" /><circle cx="14" cy="4" r="3.500" /><circle cx="4" cy="14" r="3.500" /><circle cx="14" cy="14" r="3.500" /><circle cx="4" cy="24" r="3.500" /><circle cx="14" cy="24" r="3.500" />
            </svg>
          </div>
          <div className="absolute left-[740px] top-[583px] flex h-[50px] w-[132px] items-center gap-[8px] rounded-[6px] border-2 border-[#ededec] bg-white pl-[11px] text-[22px] font-medium tracking-[0.04em] text-[#9b9a97] shadow-[0_2px_4px_rgba(0,0,0,0.08)]">
            <svg width="28" height="26" viewBox="0 0 28 26">
              <rect x="1" y="1" width="26" height="24" rx="4" fill="none" stroke="#a5a4a0" strokeWidth="2" />
              <rect x="14" y="4" width="10" height="18" fill="#a5a4a0" />
            </svg>
            OPEN
          </div>
          <div className="absolute left-[2158px] top-[1421px] flex h-[74px] w-[74px] items-center justify-center rounded-full border-2 border-[#e5e5e3] bg-white text-[38px] font-medium shadow-[0_2px_4px_rgba(0,0,0,0.15)]">?</div>
        </div>
        <div className="w-[20px] shrink-0 bg-[#ededea]"><div className="h-[975px] bg-[#cfcec9]" /></div>
      </div>
      <div className="flex h-[19px] shrink-0">
        <div className="flex-1 bg-[#ededea]"><div className="h-full w-[2085px] bg-[#cfcec9]" /></div>
        <div className="w-[20px] bg-white" />
      </div>
    </main>
  )
}

function Wallpaper() {
  return (
    <svg className="absolute inset-0" width="2880" height="1800" viewBox="0 0 2880 1800">
      <rect width="2880" height="1800" fill="#1b1541" />
      <rect width="2880" height="60" fill="#6a50e0" />
      <rect width="515" height="60" fill="#8a5550" />
      <g fill="#e3a98a">
        <path d="M105 48h16l8 12h-16zM158 48h23v12h-23zM304 48h16l6 12h-18zM458 48h18l8 12h-18zM503 48h10l3 12h-10z" />
      </g>
      <rect y="60" width="6" height="500" fill="#5a3a48" />
      <path d="M2880 1674v126H2618l75-126z" fill="#261c5c" />
      <path d="M2618 1674h75l-31 51c-20-12-35-28-44-51z" fill="#a37462" />
      <path d="M320 1800l60-14H340l-40 14z" fill="#b47a63" />
      <path d="M530 1786h50l30 14h-70zM610 1786h40l20 14h-40zM735 1786h95l-5 14H745z" fill="#b47360" />
      <rect x="830" y="1786" width="520" height="14" fill="#6b5cc0" />
      <path d="M1430 1786h30l20 14h-40z" fill="#b47360" />
      <rect x="1480" y="1786" width="180" height="14" fill="#0d0a14" />
      <rect x="1660" y="1786" width="200" height="14" fill="#2a4f63" />
      <path d="M1930 1786h60l-10 14h-40z" fill="#a37462" />
    </svg>
  )
}

export default function App() {
  return (
    <div className="relative flex h-[1800px] w-[2880px] flex-col overflow-hidden font-[Inter,sans-serif]">
      <Wallpaper />
      <MenuBar />
      <div className="relative ml-[4px] mt-[6px] flex h-[1619px] shrink-0 overflow-hidden rounded-[20px]">
        <Sidebar />
        <Main />
      </div>
      <Dock />
    </div>
  )
}
